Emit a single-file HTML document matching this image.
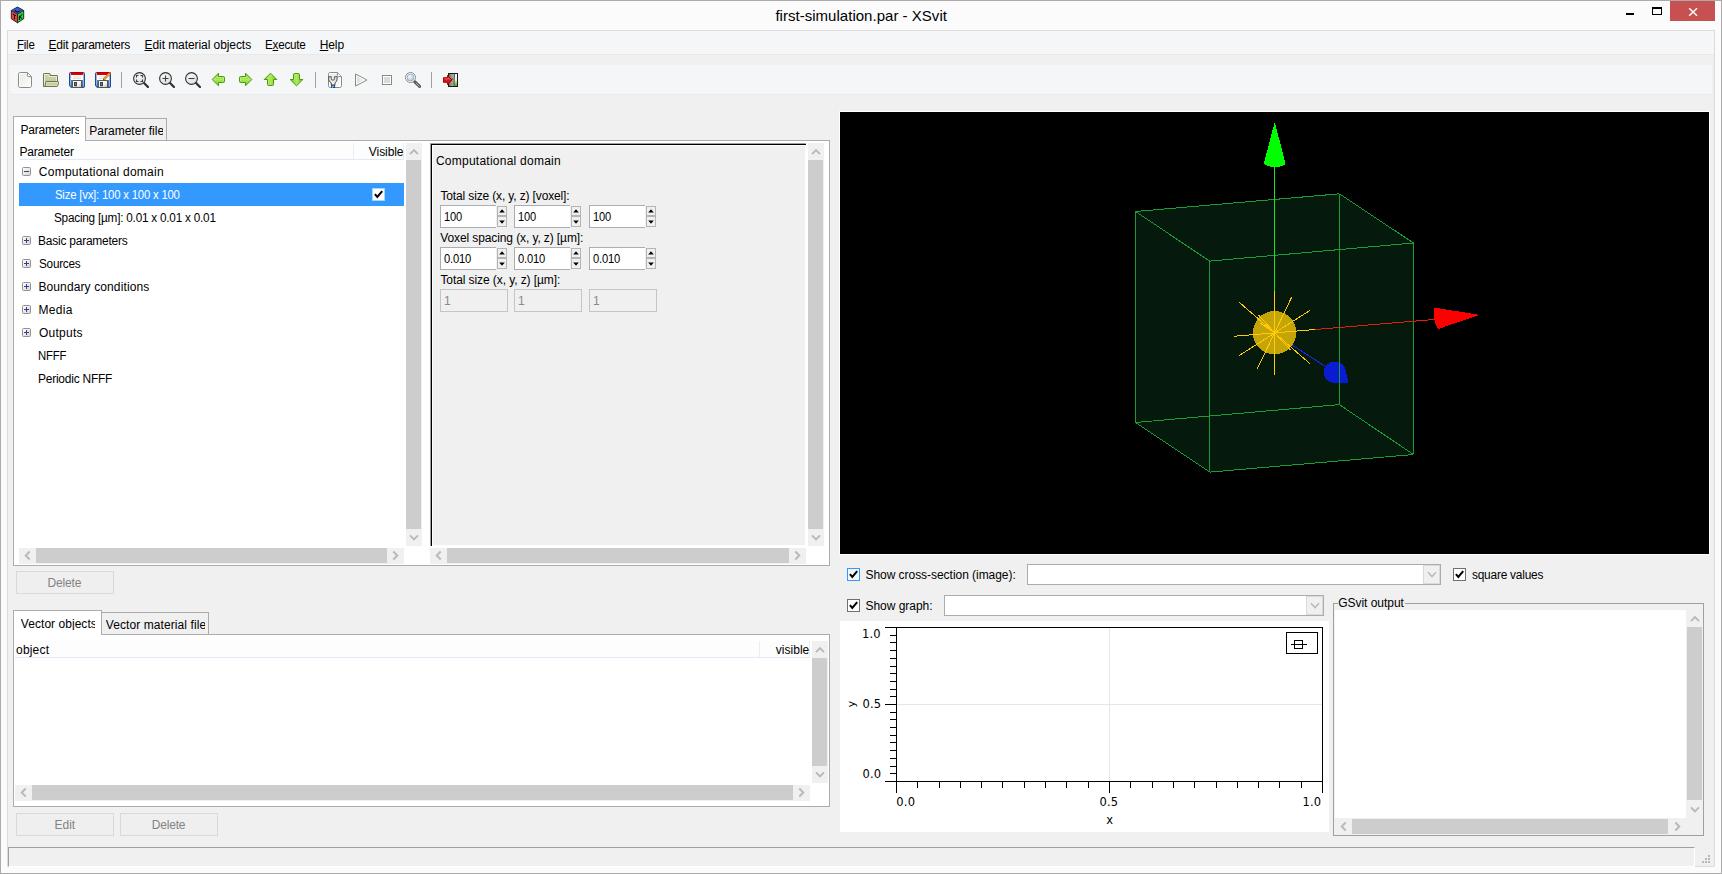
<!DOCTYPE html>
<html lang="en">
<head>
<meta charset="utf-8">
<title>first-simulation.par - XSvit</title>
<style>
html,body{margin:0;padding:0;}
body{width:1722px;height:874px;overflow:hidden;position:relative;background:#f0f0f0;font-family:"Liberation Sans",sans-serif;font-size:12px;color:#000;}
div,span.t,svg{position:absolute;box-sizing:border-box;}
.t{white-space:nowrap;line-height:1;}
u{text-decoration:underline;text-decoration-thickness:1px;text-underline-offset:1px;}
.sb{background:#f0f0f0;}
.th{background:#cdcdcd;}
.btn{border:1px solid #d9d9d9;background:#efefef;}
.entry{border:1px solid #abadb3;background:#fff;}
.entry.dis{background:#f0f0f0;border-color:#c5c5c5;}
.white{background:#fff;}

</style>
</head>
<body>
<div class="frame" style="left:0px;top:0px;width:1722px;height:874px;background:#fbfbfb;border:1px solid #ababab;"></div>
<div class="client" style="left:7px;top:30px;width:1708px;height:837px;background:#f0f0f0;border:1px solid #dcdcdc;"></div>
<span class="t" style="left:775.41px;top:7.80px;font-size:15px;letter-spacing:0.023px;">first-simulation.par - XSvit</span><div style="left:1626px;top:13px;width:8px;height:2px;background:#000;"></div>
<div style="left:1652px;top:7px;width:10px;height:8px;border:1px solid #000;border-top-width:2px;"></div>
<div style="left:1670px;top:1px;width:45px;height:20px;background:#c75050;"><svg width="45" height="20" viewBox="0 0 45 20"><path d="M19.2 7.2 L27 14.7 M27 7.2 L19.2 14.7" stroke="#fff" stroke-width="1.5" fill="none"/></svg></div>
<svg style="left:10px;top:6px" width="16" height="18" viewBox="0 0 16 18">
<polygon points="7.5,1 13.7,4.5 7.5,8 1.3,4.5" fill="#2e5fd0"/>
<polygon points="1.3,4.5 7.5,8 7.5,16.8 1.3,12.8" fill="#e8403c"/>
<polygon points="13.7,4.5 7.5,8 7.5,16.8 13.7,12.8" fill="#2fd13a"/>
<path d="M7.5,1 13.7,4.5 13.7,12.8 7.5,16.8 1.3,12.8 1.3,4.5Z M1.3,4.5 7.5,8 13.7,4.5 M7.5,8V16.8" fill="none" stroke="#1a1a2a" stroke-width="0.9"/>
<path d="M3,8.2 6,9.8 M4.5,9 4.5,13.3 M9.4,9.8 9.4,14 M12,8.3 9.6,11.3 12.2,12.4 M5.6,4.2 a2,1.2 0 1 0 3.8,0.4" fill="none" stroke="#000" stroke-width="1"/>
</svg><div class="menubar" style="left:8px;top:31px;width:1706px;height:24px;background:#f5f6f7;border-bottom:1px solid #e8e9ea;"></div>
<span class="t" style="left:16.50px;top:38.84px;font-size:12px;letter-spacing:-0.220px;transform:scaleX(0.9519);transform-origin:0 0;"><u>F</u>ile</span><span class="t" style="left:48.50px;top:38.84px;font-size:12px;letter-spacing:-0.216px;"><u>E</u>dit parameters</span><span class="t" style="left:144.50px;top:38.84px;font-size:12px;letter-spacing:-0.071px;"><u>E</u>dit material objects</span><span class="t" style="left:264.70px;top:38.84px;font-size:12px;letter-spacing:-0.220px;transform:scaleX(0.9714);transform-origin:0 0;">E<u>x</u>ecute</span><span class="t" style="left:319.70px;top:38.84px;font-size:12px;letter-spacing:-0.095px;"><u>H</u>elp</span><div class="toolbar" style="left:10px;top:65px;width:1702px;height:30px;background:#f5f6f7;border-bottom:1px solid #eaebec;"></div>
<div style="left:121px;top:72px;width:1px;height:16px;background:#a0a0a0;"></div>
<div style="left:315px;top:72px;width:1px;height:16px;background:#a0a0a0;"></div>
<div style="left:431px;top:72px;width:1px;height:16px;background:#a0a0a0;"></div>
<svg style="left:17px;top:72px" width="16" height="16" viewBox="0 0 16 16"><defs>
<linearGradient id="gDoc" x1="0" y1="0" x2="1" y2="1"><stop offset="0" stop-color="#e6e7e3"/><stop offset="0.55" stop-color="#f4f4f2"/><stop offset="1" stop-color="#ffffff"/></linearGradient>
<linearGradient id="gFold" x1="0" y1="0" x2="0" y2="1"><stop offset="0" stop-color="#d0d5a8"/><stop offset="0.6" stop-color="#c6caa2"/><stop offset="1" stop-color="#b4b79a"/></linearGradient>
<linearGradient id="gFlop" x1="0" y1="0" x2="0" y2="1"><stop offset="0" stop-color="#6f9fd8"/><stop offset="1" stop-color="#3566ab"/></linearGradient>
<linearGradient id="gShut" x1="0" y1="0" x2="1" y2="1"><stop offset="0" stop-color="#ffffff"/><stop offset="0.6" stop-color="#f4f4f4"/><stop offset="1" stop-color="#b8b8b8"/></linearGradient>
<linearGradient id="gArrH" x1="0" y1="0" x2="0" y2="1"><stop offset="0" stop-color="#73c51c"/><stop offset="0.5" stop-color="#aee860"/><stop offset="1" stop-color="#73c51c"/></linearGradient>
<linearGradient id="gArrV" x1="0" y1="0" x2="1" y2="0"><stop offset="0" stop-color="#73c51c"/><stop offset="0.5" stop-color="#aee860"/><stop offset="1" stop-color="#73c51c"/></linearGradient>
<radialGradient id="gLens" cx="0.4" cy="0.35" r="0.7"><stop offset="0" stop-color="#f6f6f4"/><stop offset="1" stop-color="#dededa"/></radialGradient>
<radialGradient id="gLensB" cx="0.35" cy="0.3" r="0.8"><stop offset="0" stop-color="#f4f8fc"/><stop offset="1" stop-color="#b4c6de"/></radialGradient>
<linearGradient id="gPlay" x1="0" y1="0" x2="1" y2="0"><stop offset="0" stop-color="#d6d9d2"/><stop offset="1" stop-color="#ffffff"/></linearGradient>
<linearGradient id="gDoor" x1="0" y1="0" x2="1" y2="0"><stop offset="0" stop-color="#6e706c"/><stop offset="1" stop-color="#c4c6c0"/></linearGradient>
<linearGradient id="gDoorR" x1="0" y1="0" x2="0" y2="1"><stop offset="0" stop-color="#ffffff"/><stop offset="0.5" stop-color="#e8f0dc"/><stop offset="1" stop-color="#4e9a06"/></linearGradient>
<linearGradient id="gWr" x1="0" y1="0" x2="1" y2="0"><stop offset="0" stop-color="#d8dad6"/><stop offset="0.5" stop-color="#f4f5f3"/><stop offset="1" stop-color="#d0d2cd"/></linearGradient>
</defs><path d="M3.3 0.5 H10.3 L14.5 4.6 V13.7 Q14.5 15.5 12.7 15.5 H3.3 Q1.5 15.5 1.5 13.7 V2.3 Q1.5 0.5 3.3 0.5 Z" fill="url(#gDoc)" stroke="#888a85" stroke-width="1"/><path d="M2.5 14.5 V1.5 H9.8 M13.5 5.5 V14.5" fill="none" stroke="#fff" stroke-width="1" opacity="0.95"/><path d="M10.4 0.9 V3.5 Q10.4 4.6 11.6 4.6 H14.1" fill="#fff" stroke="#888a85" stroke-width="1"/></svg>
<svg style="left:43px;top:72px" width="16" height="16" viewBox="0 0 16 16"><path d="M1.5 1.5 H6.2 Q7 1.5 7 2.3 V3.5 H13.6 Q14.5 3.5 14.5 4.4 V9.5 H1.5 V13.6 Q1.5 14.5 0.5 14.5 V2.5 Q0.5 1.5 1.5 1.5 Z" fill="url(#gFold)" stroke="#6f7354" stroke-width="1"/>
<path d="M0.5 2.3 Q0.5 1.5 1.4 1.5 H6.1 Q7 1.5 7 2.4 V3.5 H13.6 Q14.5 3.5 14.5 4.4 V13.5 Q14.5 14.5 13.5 14.5 H1.4 Q0.5 14.5 0.5 13.6 Z" fill="url(#gFold)" stroke="#6f7354" stroke-width="1"/>
<path d="M1.5 13.5 V2.5 H6 V4.5 H13.5 V9" fill="none" stroke="#eef0dc" stroke-width="1" opacity="0.9"/>
<path d="M3 9.5 H14.8 Q15.8 9.5 15.5 10.5 L14.8 13.6 Q14.5 14.5 13.5 14.5 H1.5 Q2.2 14.3 2.3 13.4 L2.6 10.3 Q2.7 9.5 3.4 9.5 Z" fill="#dfe3bd" stroke="#6f7354" stroke-width="1"/>
<path d="M3.8 11.5 H14 M3.6 12.6 H13.6" stroke="#c9cf98" stroke-width="1.2" fill="none"/></svg>
<svg style="left:69px;top:72px" width="16" height="16" viewBox="0 0 16 16"><path d="M1.5 0.5 H14.5 Q15.5 0.5 15.5 1.5 V14.5 Q15.5 15.5 14.5 15.5 H2.3 L0.5 13.8 V1.5 Q0.5 0.5 1.5 0.5 Z" fill="url(#gFlop)" stroke="#1f4b8c" stroke-width="1"/>
<path d="M1.5 13.5 V1.5 M14.5 1.5 V14.5" stroke="#a8c4e6" stroke-width="1" fill="none" opacity="0.8"/>
<rect x="2" y="0" width="12" height="8" rx="0.6" fill="#fff"/>
<rect x="2" y="0" width="12" height="3" fill="#e00000"/><rect x="2" y="0" width="12" height="1" fill="#b40000"/>
<path d="M4 4.9 H12 M4 6.5 H12" stroke="#dfe1dc" stroke-width="1" fill="none"/>
<path d="M3.5 15.5 V9.3 Q3.5 8.5 4.3 8.5 H12.5 V15.5 Z" fill="url(#gShut)" stroke="#555753" stroke-width="1"/>
<rect x="5.5" y="10.5" width="2" height="3.3" fill="#4a7ec4" stroke="#41433f" stroke-width="1"/></svg>
<svg style="left:95px;top:72px" width="16" height="16" viewBox="0 0 16 16"><path d="M1.5 0.5 H14.5 Q15.5 0.5 15.5 1.5 V14.5 Q15.5 15.5 14.5 15.5 H2.3 L0.5 13.8 V1.5 Q0.5 0.5 1.5 0.5 Z" fill="url(#gFlop)" stroke="#1f4b8c" stroke-width="1"/>
<path d="M1.5 13.5 V1.5 M14.5 1.5 V14.5" stroke="#a8c4e6" stroke-width="1" fill="none" opacity="0.8"/>
<rect x="2" y="0" width="12" height="8" rx="0.6" fill="#fff"/>
<rect x="2" y="0" width="12" height="3" fill="#e00000"/><rect x="2" y="0" width="12" height="1" fill="#b40000"/>
<path d="M4 4.9 H12 M4 6.5 H12" stroke="#dfe1dc" stroke-width="1" fill="none"/>
<path d="M3.5 15.5 V9.3 Q3.5 8.5 4.3 8.5 H12.5 V15.5 Z" fill="url(#gShut)" stroke="#555753" stroke-width="1"/>
<rect x="5.5" y="10.5" width="2" height="3.3" fill="#4a7ec4" stroke="#41433f" stroke-width="1"/><path d="M15.4 0.8 L9 7.2" stroke="#b8781c" stroke-width="2.4" fill="none"/><path d="M15.2 1 L9.4 6.8" stroke="#f2b24a" stroke-width="1.1" fill="none"/><path d="M7.9 8.3 L8.3 6.5 L9.7 7.9 Z" fill="#5c4010"/><path d="M14.4 0.4 L15.8 1.8" stroke="#c83030" stroke-width="1.4"/></svg>
<svg style="left:133px;top:72px" width="16" height="16" viewBox="0 0 16 16"><path d="M10.8 10.8 L15 15" stroke="#2e3436" stroke-width="2.2" stroke-linecap="round" fill="none"/><circle cx="6.5" cy="6.5" r="5.9" fill="url(#gLens)" stroke="#2e3436" stroke-width="1.1"/><path d="M3.5 5.5 V3.5 H5.5 M7.5 3.5 H9.5 V5.5 M9.5 7.5 V9.5 H7.5 M5.5 9.5 H3.5 V7.5" fill="none" stroke="#3a3f41" stroke-width="1.1"/></svg>
<svg style="left:159px;top:72px" width="16" height="16" viewBox="0 0 16 16"><path d="M10.8 10.8 L15 15" stroke="#2e3436" stroke-width="2.2" stroke-linecap="round" fill="none"/><circle cx="6.5" cy="6.5" r="5.9" fill="url(#gLens)" stroke="#2e3436" stroke-width="1.1"/><path d="M3.5 6.5 H9.5 M6.5 3.5 V9.5" fill="none" stroke="#3a3f41" stroke-width="1.1"/></svg>
<svg style="left:185px;top:72px" width="16" height="16" viewBox="0 0 16 16"><path d="M10.8 10.8 L15 15" stroke="#2e3436" stroke-width="2.2" stroke-linecap="round" fill="none"/><circle cx="6.5" cy="6.5" r="5.9" fill="url(#gLens)" stroke="#2e3436" stroke-width="1.1"/><path d="M3.5 6.5 H9.5" fill="none" stroke="#3a3f41" stroke-width="1.1"/></svg>
<svg style="left:211px;top:72px" width="16" height="16" viewBox="0 0 16 16"><path d="M1.2 7.5 L7.5 1.2 V4.5 H12.4 Q13.5 4.5 13.5 5.6 V9.4 Q13.5 10.5 12.4 10.5 H7.5 V13.8 Z" fill="url(#gArrH)" stroke="#4e9a06" stroke-width="1" stroke-linejoin="round"/><path d="M3 7.5 L6.5 4 V5.5 H12 Q12.5 5.5 12.5 6 V9" fill="none" stroke="#c6f08e" stroke-width="0.8" opacity="0.8"/></svg>
<svg style="left:237px;top:72px" width="16" height="16" viewBox="0 0 16 16"><path d="M14.8 7.5 L8.5 1.2 V4.5 H3.6 Q2.5 4.5 2.5 5.6 V9.4 Q2.5 10.5 3.6 10.5 H8.5 V13.8 Z" fill="url(#gArrH)" stroke="#4e9a06" stroke-width="1" stroke-linejoin="round"/><path d="M3.5 9 V6 Q3.5 5.5 4 5.5 H9.5 V4 L13 7.5" fill="none" stroke="#c6f08e" stroke-width="0.8" opacity="0.8"/></svg>
<svg style="left:263px;top:72px" width="16" height="16" viewBox="0 0 16 16"><path d="M7.5 1.2 L13.8 7.5 H10.5 V12.4 Q10.5 13.5 9.4 13.5 H5.6 Q4.5 13.5 4.5 12.4 V7.5 H1.2 Z" fill="url(#gArrV)" stroke="#4e9a06" stroke-width="1" stroke-linejoin="round"/><path d="M7.5 3 L4 6.5 H5.5 V12.6" fill="none" stroke="#c6f08e" stroke-width="0.8" opacity="0.8"/></svg>
<svg style="left:289px;top:72px" width="16" height="16" viewBox="0 0 16 16"><path d="M7.5 13.8 L13.8 7.5 H10.5 V2.6 Q10.5 1.5 9.4 1.5 H5.6 Q4.5 1.5 4.5 2.6 V7.5 H1.2 Z" fill="url(#gArrV)" stroke="#4e9a06" stroke-width="1" stroke-linejoin="round"/><path d="M5.5 8.5 V3 Q5.5 2.5 6 2.5 H9" fill="none" stroke="#c6f08e" stroke-width="0.8" opacity="0.8"/></svg>
<svg style="left:327px;top:72px" width="16" height="16" viewBox="0 0 16 16"><path d="M3.3 0.5 H10.3 L14.5 4.6 V13.7 Q14.5 15.5 12.7 15.5 H3.3 Q1.5 15.5 1.5 13.7 V2.3 Q1.5 0.5 3.3 0.5 Z" fill="url(#gDoc)" stroke="#888a85" stroke-width="1"/><path d="M2.5 14.5 V1.5 H9.8 M13.5 5.5 V14.5" fill="none" stroke="#fff" stroke-width="1" opacity="0.95"/><path d="M10.4 0.9 V3.5 Q10.4 4.6 11.6 4.6 H14.1" fill="#fff" stroke="#888a85" stroke-width="1"/><path d="M1.7 4.7 H4.3 V6.8 Q4.3 8.2 5.9 8.2 Q7.4 8.2 7.4 6.8 V4.7 H10.1 V7.4 Q10.1 9.6 8 10.8 V13 H4.3 V10.8 Q1.7 9.6 1.7 7.4 Z" fill="url(#gWr)" stroke="#555753" stroke-width="1" stroke-linejoin="round"/>
<rect x="4" y="12.9" width="4.1" height="3.1" fill="#204a87"/><path d="M5.4 15.6 V14.3 H7" stroke="#cfe0f5" stroke-width="0.9" fill="none"/></svg>
<svg style="left:353px;top:72px" width="16" height="16" viewBox="0 0 16 16"><path d="M2.5 2 L14 8 L2.5 14 Z" fill="url(#gPlay)" stroke="#888a85" stroke-width="1" stroke-linejoin="round"/><path d="M3.5 3.8 L11.6 8 L3.5 12.2 Z" fill="none" stroke="#fff" stroke-width="1" opacity="0.9"/></svg>
<svg style="left:379px;top:72px" width="16" height="16" viewBox="0 0 16 16"><rect x="3.5" y="3.5" width="9" height="9" fill="#d8dad4" stroke="#888a85" stroke-width="1"/><rect x="4.5" y="4.5" width="7" height="7" fill="none" stroke="#fff" stroke-width="1"/></svg>
<svg style="left:405px;top:72px" width="16" height="16" viewBox="0 0 16 16"><path d="M9.6 9.6 L14.6 14.4" stroke="#555753" stroke-width="3" stroke-linecap="round" fill="none"/><path d="M11 11 L14.3 14.1" stroke="#b8bab5" stroke-width="1" stroke-linecap="round" fill="none"/>
<circle cx="5.5" cy="5.5" r="5" fill="#fff" stroke="#888a85" stroke-width="1"/><circle cx="5.5" cy="5.5" r="3.4" fill="url(#gLensB)" stroke="#8ea0ba" stroke-width="0.8"/></svg>
<svg style="left:443px;top:72px" width="16" height="16" viewBox="0 0 16 16"><rect x="5.5" y="1.5" width="9" height="13" fill="url(#gDoorR)" stroke="#1b1c1a" stroke-width="1"/>
<path d="M6 2 H11.3 L10.8 14 H6 Z" fill="url(#gDoor)"/><path d="M11.4 2 L10.9 13.5" stroke="#2e3436" stroke-width="0.9" fill="none"/><rect x="9.2" y="6.5" width="0.9" height="1" fill="#1b1c1a"/>
<path d="M0.5 5.7 H4.5 V3.5 L9 8 L4.5 12.5 V10.3 H0.5 Z" fill="#d81414" stroke="#a40000" stroke-width="1" stroke-linejoin="round"/><path d="M1.5 7 H5.4 V5.8 L7.5 8" fill="none" stroke="#f06868" stroke-width="0.9"/></svg><div class="panel" style="left:13px;top:140px;width:817px;height:426px;background:#fff;border:1px solid #acacac;"></div>
<div class="tab" style="left:85px;top:118px;width:82px;height:23px;background:#f0f0f0;border:1px solid #acacac;"></div>
<div class="tab sel" style="left:13px;top:116px;width:73px;height:25px;background:#fff;border:1px solid #acacac;border-bottom:none;"></div>
<span class="t" style="left:20.50px;top:123.84px;font-size:12px;letter-spacing:-0.210px;width:58.80px;overflow:hidden;">Parameters</span><span class="t" style="left:89.30px;top:124.84px;font-size:12px;letter-spacing:0.010px;width:73.30px;overflow:hidden;">Parameter file</span><div class="hdr" style="left:19px;top:143px;width:385px;height:17px;background:#fdfdfd;border-bottom:1px solid #e0e9f5;"></div>
<div style="left:353px;top:143px;width:1px;height:16px;background:#e6eef8;"></div>
<div style="left:403px;top:143px;width:1px;height:16px;background:#e6eef8;"></div>
<span class="t" style="left:19.40px;top:145.84px;font-size:12px;letter-spacing:-0.175px;">Parameter</span><span class="t" style="left:368.86px;top:145.84px;font-size:12px;letter-spacing:-0.075px;">Visible</span><div class="rowsel" style="left:19px;top:183px;width:385px;height:23px;background:#3399ff;"></div>
<span class="t" style="left:38.84px;top:165.84px;font-size:12px;letter-spacing:0.245px;">Computational domain</span><svg style="left:22px;top:167px" width="9" height="9" viewBox="0 0 9 9"><defs><linearGradient id="eg176" x1="0" y1="0" x2="1" y2="1"><stop offset="0" stop-color="#fff"/><stop offset="1" stop-color="#d6d3cc"/></linearGradient></defs><rect x="0.5" y="0.5" width="8" height="8" rx="1" fill="url(#eg176)" stroke="#919191"/><path d="M2 4.5H7" stroke="#2b3f9b" stroke-width="1" fill="none"/></svg><span class="t" style="left:54.79px;top:188.84px;font-size:12px;color:#fff;letter-spacing:-0.220px;transform:scaleX(0.9470);transform-origin:0 0;">Size [vx]: 100 x 100 x 100</span><span class="t" style="left:54.27px;top:211.84px;font-size:12px;letter-spacing:-0.220px;transform:scaleX(0.9784);transform-origin:0 0;">Spacing [µm]: 0.01 x 0.01 x 0.01</span><span class="t" style="left:38.40px;top:234.84px;font-size:12px;letter-spacing:-0.220px;transform:scaleX(0.9969);transform-origin:0 0;">Basic parameters</span><svg style="left:22px;top:236px" width="9" height="9" viewBox="0 0 9 9"><defs><linearGradient id="eg245" x1="0" y1="0" x2="1" y2="1"><stop offset="0" stop-color="#fff"/><stop offset="1" stop-color="#d6d3cc"/></linearGradient></defs><rect x="0.5" y="0.5" width="8" height="8" rx="1" fill="url(#eg245)" stroke="#919191"/><path d="M2 4.5H7 M4.5 2V7" stroke="#2b3f9b" stroke-width="1" fill="none"/></svg><span class="t" style="left:38.66px;top:257.84px;font-size:12px;letter-spacing:-0.220px;transform:scaleX(0.9751);transform-origin:0 0;">Sources</span><svg style="left:22px;top:259px" width="9" height="9" viewBox="0 0 9 9"><defs><linearGradient id="eg268" x1="0" y1="0" x2="1" y2="1"><stop offset="0" stop-color="#fff"/><stop offset="1" stop-color="#d6d3cc"/></linearGradient></defs><rect x="0.5" y="0.5" width="8" height="8" rx="1" fill="url(#eg268)" stroke="#919191"/><path d="M2 4.5H7 M4.5 2V7" stroke="#2b3f9b" stroke-width="1" fill="none"/></svg><span class="t" style="left:38.40px;top:280.84px;font-size:12px;letter-spacing:0.118px;">Boundary conditions</span><svg style="left:22px;top:282px" width="9" height="9" viewBox="0 0 9 9"><defs><linearGradient id="eg291" x1="0" y1="0" x2="1" y2="1"><stop offset="0" stop-color="#fff"/><stop offset="1" stop-color="#d6d3cc"/></linearGradient></defs><rect x="0.5" y="0.5" width="8" height="8" rx="1" fill="url(#eg291)" stroke="#919191"/><path d="M2 4.5H7 M4.5 2V7" stroke="#2b3f9b" stroke-width="1" fill="none"/></svg><span class="t" style="left:38.40px;top:303.84px;font-size:12px;letter-spacing:0.347px;">Media</span><svg style="left:22px;top:305px" width="9" height="9" viewBox="0 0 9 9"><defs><linearGradient id="eg314" x1="0" y1="0" x2="1" y2="1"><stop offset="0" stop-color="#fff"/><stop offset="1" stop-color="#d6d3cc"/></linearGradient></defs><rect x="0.5" y="0.5" width="8" height="8" rx="1" fill="url(#eg314)" stroke="#919191"/><path d="M2 4.5H7 M4.5 2V7" stroke="#2b3f9b" stroke-width="1" fill="none"/></svg><span class="t" style="left:38.90px;top:326.84px;font-size:12px;letter-spacing:0.270px;">Outputs</span><svg style="left:22px;top:328px" width="9" height="9" viewBox="0 0 9 9"><defs><linearGradient id="eg337" x1="0" y1="0" x2="1" y2="1"><stop offset="0" stop-color="#fff"/><stop offset="1" stop-color="#d6d3cc"/></linearGradient></defs><rect x="0.5" y="0.5" width="8" height="8" rx="1" fill="url(#eg337)" stroke="#919191"/><path d="M2 4.5H7 M4.5 2V7" stroke="#2b3f9b" stroke-width="1" fill="none"/></svg><span class="t" style="left:38.40px;top:349.84px;font-size:12px;letter-spacing:-0.220px;transform:scaleX(0.9450);transform-origin:0 0;">NFFF</span><span class="t" style="left:38.40px;top:372.84px;font-size:12px;letter-spacing:-0.220px;transform:scaleX(0.9955);transform-origin:0 0;">Periodic NFFF</span><div style="left:372px;top:188px;width:13px;height:13px;background:#fff;border:1px solid #a9d3ff;"><svg width="13" height="13" viewBox="0 0 13 13" style="left:-1px;top:-1px"><path d="M2.9 6.2 L5.3 9 L10.2 3.2" fill="none" stroke="#000" stroke-width="2"/></svg></div>
<div class="sb" style="left:406px;top:143px;width:16px;height:403px;"></div>
<div class="th" style="left:406px;top:160px;width:15px;height:369px;"></div>
<svg style="left:406px;top:143px" width="16" height="17" viewBox="0 0 16 17"><path d="M4 11.2 L8 7.2 L12 11.2" fill="none" stroke="#b8b8b8" stroke-width="1.9"/></svg><svg style="left:406px;top:529px" width="16" height="17" viewBox="0 0 16 17"><path d="M4 6.3 L8 10.3 L12 6.3" fill="none" stroke="#b8b8b8" stroke-width="1.9"/></svg><div class="sb" style="left:19px;top:548px;width:385px;height:16px;"></div>
<div class="th" style="left:36px;top:548px;width:351px;height:15px;"></div>
<svg style="left:19px;top:548px" width="17" height="16" viewBox="0 0 17 16"><path d="M10.7 3.5 L6.7 7.5 L10.7 11.5" fill="none" stroke="#b8b8b8" stroke-width="1.9"/></svg><svg style="left:387px;top:548px" width="17" height="16" viewBox="0 0 17 16"><path d="M6.3 3.5 L10.3 7.5 L6.3 11.5" fill="none" stroke="#b8b8b8" stroke-width="1.9"/></svg><div class="sub" style="left:430px;top:143px;width:376px;height:403px;border-left:1px solid #a0a0a0;border-top:1px solid #a0a0a0;"></div>
<div style="left:431px;top:144px;width:375px;height:402px;border-left:1px solid #000;border-top:1px solid #000;"></div>
<div style="left:433px;top:146px;width:372px;height:399px;background:#f0f0f0;"></div>
<div class="sb" style="left:808px;top:143px;width:16px;height:403px;"></div>
<div class="th" style="left:808px;top:160px;width:15px;height:369px;"></div>
<svg style="left:808px;top:143px" width="16" height="17" viewBox="0 0 16 17"><path d="M4 11.2 L8 7.2 L12 11.2" fill="none" stroke="#b8b8b8" stroke-width="1.9"/></svg><svg style="left:808px;top:529px" width="16" height="17" viewBox="0 0 16 17"><path d="M4 6.3 L8 10.3 L12 6.3" fill="none" stroke="#b8b8b8" stroke-width="1.9"/></svg><div class="sb" style="left:430px;top:548px;width:376px;height:16px;"></div>
<div class="th" style="left:447px;top:548px;width:342px;height:15px;"></div>
<svg style="left:430px;top:548px" width="17" height="16" viewBox="0 0 17 16"><path d="M10.7 3.5 L6.7 7.5 L10.7 11.5" fill="none" stroke="#b8b8b8" stroke-width="1.9"/></svg><svg style="left:789px;top:548px" width="17" height="16" viewBox="0 0 17 16"><path d="M6.3 3.5 L10.3 7.5 L6.3 11.5" fill="none" stroke="#b8b8b8" stroke-width="1.9"/></svg><span class="t" style="left:435.94px;top:154.84px;font-size:12px;letter-spacing:0.245px;">Computational domain</span><span class="t" style="left:440.46px;top:189.84px;font-size:12px;letter-spacing:-0.143px;">Total size (x, y, z) [voxel]:</span><span class="t" style="left:440.26px;top:231.84px;font-size:12px;letter-spacing:-0.106px;">Voxel spacing (x, y, z) [µm]:</span><span class="t" style="left:440.46px;top:273.84px;font-size:12px;letter-spacing:-0.089px;">Total size (x, y, z) [µm]:</span><div class="entry" style="left:440px;top:205px;width:56px;height:23px;border-right:none;"></div>
<div style="left:497px;top:206px;width:10px;height:10px;border:1px solid #b4b4b4;background:#f0f0f0;"><svg style="left:-1px;top:-1px" width="10" height="10" viewBox="0 0 10 10"><path d="M2.2 6.5 L5 3.3 L7.8 6.5Z" fill="#000"/></svg></div>
<div style="left:497px;top:216px;width:10px;height:11px;border:1px solid #b4b4b4;background:#f0f0f0;"><svg style="left:-1px;top:-0.5px" width="10" height="10" viewBox="0 0 10 10"><path d="M2.2 3.5 L5 6.7 L7.8 3.5Z" fill="#000"/></svg></div>
<span class="t" style="left:443.95px;top:210.84px;font-size:12px;letter-spacing:-0.220px;transform:scaleX(0.9245);transform-origin:0 0;">100</span><div class="entry" style="left:440px;top:247px;width:56px;height:23px;border-right:none;"></div>
<div style="left:497px;top:248px;width:10px;height:10px;border:1px solid #b4b4b4;background:#f0f0f0;"><svg style="left:-1px;top:-1px" width="10" height="10" viewBox="0 0 10 10"><path d="M2.2 6.5 L5 3.3 L7.8 6.5Z" fill="#000"/></svg></div>
<div style="left:497px;top:258px;width:10px;height:11px;border:1px solid #b4b4b4;background:#f0f0f0;"><svg style="left:-1px;top:-0.5px" width="10" height="10" viewBox="0 0 10 10"><path d="M2.2 3.5 L5 6.7 L7.8 3.5Z" fill="#000"/></svg></div>
<span class="t" style="left:444.33px;top:252.84px;font-size:12px;letter-spacing:-0.220px;transform:scaleX(0.9313);transform-origin:0 0;">0.010</span><div class="entry dis" style="left:440px;top:289px;width:68px;height:23px;"></div>
<span class="t" style="left:444.00px;top:294.84px;font-size:12px;color:#8a8a8a;">1</span><div class="entry" style="left:514px;top:205px;width:56px;height:23px;border-right:none;"></div>
<div style="left:571px;top:206px;width:10px;height:10px;border:1px solid #b4b4b4;background:#f0f0f0;"><svg style="left:-1px;top:-1px" width="10" height="10" viewBox="0 0 10 10"><path d="M2.2 6.5 L5 3.3 L7.8 6.5Z" fill="#000"/></svg></div>
<div style="left:571px;top:216px;width:10px;height:11px;border:1px solid #b4b4b4;background:#f0f0f0;"><svg style="left:-1px;top:-0.5px" width="10" height="10" viewBox="0 0 10 10"><path d="M2.2 3.5 L5 6.7 L7.8 3.5Z" fill="#000"/></svg></div>
<span class="t" style="left:517.96px;top:210.84px;font-size:12px;letter-spacing:-0.220px;transform:scaleX(0.9245);transform-origin:0 0;">100</span><div class="entry" style="left:514px;top:247px;width:56px;height:23px;border-right:none;"></div>
<div style="left:571px;top:248px;width:10px;height:10px;border:1px solid #b4b4b4;background:#f0f0f0;"><svg style="left:-1px;top:-1px" width="10" height="10" viewBox="0 0 10 10"><path d="M2.2 6.5 L5 3.3 L7.8 6.5Z" fill="#000"/></svg></div>
<div style="left:571px;top:258px;width:10px;height:11px;border:1px solid #b4b4b4;background:#f0f0f0;"><svg style="left:-1px;top:-0.5px" width="10" height="10" viewBox="0 0 10 10"><path d="M2.2 3.5 L5 6.7 L7.8 3.5Z" fill="#000"/></svg></div>
<span class="t" style="left:518.33px;top:252.84px;font-size:12px;letter-spacing:-0.220px;transform:scaleX(0.9313);transform-origin:0 0;">0.010</span><div class="entry dis" style="left:514px;top:289px;width:68px;height:23px;"></div>
<span class="t" style="left:518.00px;top:294.84px;font-size:12px;color:#8a8a8a;">1</span><div class="entry" style="left:589px;top:205px;width:56px;height:23px;border-right:none;"></div>
<div style="left:646px;top:206px;width:10px;height:10px;border:1px solid #b4b4b4;background:#f0f0f0;"><svg style="left:-1px;top:-1px" width="10" height="10" viewBox="0 0 10 10"><path d="M2.2 6.5 L5 3.3 L7.8 6.5Z" fill="#000"/></svg></div>
<div style="left:646px;top:216px;width:10px;height:11px;border:1px solid #b4b4b4;background:#f0f0f0;"><svg style="left:-1px;top:-0.5px" width="10" height="10" viewBox="0 0 10 10"><path d="M2.2 3.5 L5 6.7 L7.8 3.5Z" fill="#000"/></svg></div>
<span class="t" style="left:592.96px;top:210.84px;font-size:12px;letter-spacing:-0.220px;transform:scaleX(0.9245);transform-origin:0 0;">100</span><div class="entry" style="left:589px;top:247px;width:56px;height:23px;border-right:none;"></div>
<div style="left:646px;top:248px;width:10px;height:10px;border:1px solid #b4b4b4;background:#f0f0f0;"><svg style="left:-1px;top:-1px" width="10" height="10" viewBox="0 0 10 10"><path d="M2.2 6.5 L5 3.3 L7.8 6.5Z" fill="#000"/></svg></div>
<div style="left:646px;top:258px;width:10px;height:11px;border:1px solid #b4b4b4;background:#f0f0f0;"><svg style="left:-1px;top:-0.5px" width="10" height="10" viewBox="0 0 10 10"><path d="M2.2 3.5 L5 6.7 L7.8 3.5Z" fill="#000"/></svg></div>
<span class="t" style="left:593.33px;top:252.84px;font-size:12px;letter-spacing:-0.220px;transform:scaleX(0.9313);transform-origin:0 0;">0.010</span><div class="entry dis" style="left:589px;top:289px;width:68px;height:23px;"></div>
<span class="t" style="left:593.00px;top:294.84px;font-size:12px;color:#8a8a8a;">1</span><div class="btn" style="left:16px;top:571px;width:98px;height:23px;"></div>
<span class="t" style="left:47.60px;top:576.84px;font-size:12px;color:#838383;letter-spacing:-0.171px;">Delete</span><div class="panel" style="left:13px;top:634px;width:817px;height:173px;background:#fff;border:1px solid #acacac;"></div>
<div class="tab" style="left:101px;top:612px;width:108px;height:23px;background:#f0f0f0;border:1px solid #acacac;"></div>
<div class="tab sel" style="left:13px;top:610px;width:89px;height:25px;background:#fff;border:1px solid #acacac;border-bottom:none;"></div>
<span class="t" style="left:20.86px;top:617.84px;font-size:12px;letter-spacing:0.043px;width:74.54px;overflow:hidden;">Vector objects</span><span class="t" style="left:105.86px;top:618.84px;font-size:12px;letter-spacing:0.080px;width:98.84px;overflow:hidden;">Vector material file</span><div class="hdr" style="left:15px;top:641px;width:795px;height:17px;background:#fdfdfd;border-bottom:1px solid #e0e9f5;"></div>
<div style="left:759px;top:641px;width:1px;height:16px;background:#e6eef8;"></div>
<div style="left:809px;top:641px;width:1px;height:16px;background:#e6eef8;"></div>
<span class="t" style="left:16.04px;top:643.84px;font-size:12px;letter-spacing:0.190px;">object</span><span class="t" style="left:775.87px;top:643.84px;font-size:12px;letter-spacing:0.004px;">visible</span><div class="sb" style="left:812px;top:641px;width:16px;height:142px;"></div>
<div class="th" style="left:812px;top:658px;width:15px;height:108px;"></div>
<svg style="left:812px;top:641px" width="16" height="17" viewBox="0 0 16 17"><path d="M4 11.2 L8 7.2 L12 11.2" fill="none" stroke="#b8b8b8" stroke-width="1.9"/></svg><svg style="left:812px;top:766px" width="16" height="17" viewBox="0 0 16 17"><path d="M4 6.3 L8 10.3 L12 6.3" fill="none" stroke="#b8b8b8" stroke-width="1.9"/></svg><div class="sb" style="left:15px;top:785px;width:795px;height:16px;"></div>
<div class="th" style="left:32px;top:785px;width:761px;height:15px;"></div>
<svg style="left:15px;top:785px" width="17" height="16" viewBox="0 0 17 16"><path d="M10.7 3.5 L6.7 7.5 L10.7 11.5" fill="none" stroke="#b8b8b8" stroke-width="1.9"/></svg><svg style="left:793px;top:785px" width="17" height="16" viewBox="0 0 17 16"><path d="M6.3 3.5 L10.3 7.5 L6.3 11.5" fill="none" stroke="#b8b8b8" stroke-width="1.9"/></svg><div class="btn" style="left:16px;top:813px;width:98px;height:23px;"></div>
<div class="btn" style="left:120px;top:813px;width:98px;height:23px;"></div>
<span class="t" style="left:54.60px;top:818.84px;font-size:12px;color:#838383;letter-spacing:-0.073px;">Edit</span><span class="t" style="left:151.70px;top:818.84px;font-size:12px;color:#838383;letter-spacing:-0.171px;">Delete</span><div class="status" style="left:8px;top:847px;width:1687px;height:20px;border-top:1px solid #a0a0a0;border-left:1px solid #a0a0a0;border-bottom:1px solid #fff;border-right:1px solid #fff;"></div>
<svg style="left:1700px;top:853px" width="12" height="12" viewBox="0 0 12 12"><g fill="#b8b8b8"><rect x="8" y="2" width="2" height="2"/><rect x="5" y="5" width="2" height="2"/><rect x="8" y="5" width="2" height="2"/><rect x="2" y="8" width="2" height="2"/><rect x="5" y="8" width="2" height="2"/><rect x="8" y="8" width="2" height="2"/></g></svg><div style="left:839px;top:111px;width:871px;height:444px;background:#fff;"></div>
<div class="view3d" style="left:840px;top:112px;width:869px;height:442px;background:#000;"><svg style="left:0;top:0" width="869" height="442" viewBox="0 0 869 442" shape-rendering="crispEdges">
<polygon points="295.6,99.5 499.4,81.8 573.4,131.0 573.5,342.5 370.0,360.1 295.5,310.5" fill="#051a0d"/>
<line x1="295.6" y1="99.5" x2="499.4" y2="81.8" stroke="#1c9a36" stroke-width="1"/>
<line x1="499.4" y1="81.8" x2="573.4" y2="131.0" stroke="#1c9a36" stroke-width="1"/>
<line x1="573.4" y1="131.0" x2="369.6" y2="149.1" stroke="#1c9a36" stroke-width="1"/>
<line x1="369.6" y1="149.1" x2="295.6" y2="99.5" stroke="#1c9a36" stroke-width="1"/>
<line x1="295.5" y1="310.5" x2="499.3" y2="292.6" stroke="#1c9a36" stroke-width="1"/>
<line x1="499.3" y1="292.6" x2="573.5" y2="342.5" stroke="#1c9a36" stroke-width="1"/>
<line x1="573.5" y1="342.5" x2="370.0" y2="360.1" stroke="#1c9a36" stroke-width="1"/>
<line x1="370.0" y1="360.1" x2="295.5" y2="310.5" stroke="#1c9a36" stroke-width="1"/>
<line x1="295.6" y1="99.5" x2="295.5" y2="310.5" stroke="#1c9a36" stroke-width="1"/>
<line x1="499.4" y1="81.8" x2="499.3" y2="292.6" stroke="#1c9a36" stroke-width="1"/>
<line x1="573.4" y1="131.0" x2="573.5" y2="342.5" stroke="#1c9a36" stroke-width="1"/>
<line x1="369.6" y1="149.1" x2="370.0" y2="360.1" stroke="#1c9a36" stroke-width="1"/>
<line x1="434.7" y1="53.0" x2="434.7" y2="179.0" stroke="#22e022" stroke-width="1"/>
<path d="M434.7,10.0 L445.4,51.0 A10.7,4 0 0 1 424.0,51.0 Z" fill="#00ff00"/>
<circle cx="434.6" cy="220.7" r="21.7" fill="#c5a408"/>
<line x1="434.7" y1="179.0" x2="434.7" y2="263.0" stroke="#ffcb05" stroke-width="1"/>
<line x1="451.8" y1="184.9" x2="417.3" y2="256.8" stroke="#ffcb05" stroke-width="1"/>
<line x1="470.0" y1="198.4" x2="398.9" y2="243.7" stroke="#ffcb05" stroke-width="1"/>
<line x1="398.9" y1="190.0" x2="470.0" y2="251.7" stroke="#ffcb05" stroke-width="1"/>
<line x1="393.9" y1="224.3" x2="475.2" y2="217.5" stroke="#ffcb05" stroke-width="1"/>
<line x1="418.6" y1="203.2" x2="450.5" y2="238.0" stroke="#ffcb05" stroke-width="1"/>
<line x1="420.0" y1="211.0" x2="434.5" y2="220.7" stroke="#ffcb05" stroke-width="1"/>
<line x1="475.2" y1="217.5" x2="596.0" y2="207.3" stroke="#e01e10" stroke-width="1"/>
<path d="M639.3,202.9 L594.6,195.6 Q591.5,206.0 598.2,217.0 Z" fill="#ff0000"/>
<line x1="452.0" y1="233.0" x2="486.0" y2="254.8" stroke="#1428e8" stroke-width="1"/>
<path d="M495.0,249.6 C501.0,249.6 504.5,253.0 505.5,258.0 L508.3,269.5 Q508.5,271.0 506.5,271.0 L493.0,271.0 C487.0,270.0 483.6,265.5 483.6,260.0 C483.6,254.0 488.5,249.6 495.0,249.6 Z" fill="#0a1cd2"/>
<line x1="499.4" y1="81.8" x2="499.3" y2="292.6" stroke="#1c9a36" stroke-width="1"/>
</svg></div>
<div style="left:847px;top:568px;width:13px;height:13px;background:#f3f8fe;border:1px solid #3399ff;"><svg width="13" height="13" viewBox="0 0 13 13" style="left:-1px;top:-1px"><path d="M2.9 6.2 L5.3 9 L10.2 3.2" fill="none" stroke="#000" stroke-width="2"/></svg></div>
<span class="t" style="left:865.46px;top:568.84px;font-size:12px;letter-spacing:-0.040px;">Show cross-section (image):</span><div class="combo" style="left:1027px;top:564px;width:414px;height:21px;border:1px solid #acacac;background:#fff;"></div>
<div style="left:1423px;top:565px;width:17px;height:19px;border:1px solid #dadada;background:#f0f0f0;"><svg style="left:3px;top:5px" width="10" height="8" viewBox="0 0 10 8"><path d="M1 1.2 L5 5.6 L9 1.2" fill="none" stroke="#b9b9b9" stroke-width="1.5"/></svg></div>
<div style="left:1453px;top:568px;width:13px;height:13px;background:#fff;border:1px solid #707070;"><svg width="13" height="13" viewBox="0 0 13 13" style="left:-1px;top:-1px"><path d="M2.9 6.2 L5.3 9 L10.2 3.2" fill="none" stroke="#000" stroke-width="2"/></svg></div>
<span class="t" style="left:1472.00px;top:568.84px;font-size:12px;letter-spacing:-0.220px;transform:scaleX(0.9904);transform-origin:0 0;">square values</span><div style="left:847px;top:599px;width:13px;height:13px;background:#fff;border:1px solid #707070;"><svg width="13" height="13" viewBox="0 0 13 13" style="left:-1px;top:-1px"><path d="M2.9 6.2 L5.3 9 L10.2 3.2" fill="none" stroke="#000" stroke-width="2"/></svg></div>
<span class="t" style="left:865.46px;top:599.84px;font-size:12px;letter-spacing:-0.022px;">Show graph:</span><div class="combo" style="left:944px;top:595px;width:380px;height:21px;border:1px solid #acacac;background:#fff;"></div>
<div style="left:1306px;top:596px;width:17px;height:19px;border:1px solid #dadada;background:#f0f0f0;"><svg style="left:3px;top:5px" width="10" height="8" viewBox="0 0 10 8"><path d="M1 1.2 L5 5.6 L9 1.2" fill="none" stroke="#b9b9b9" stroke-width="1.5"/></svg></div>
<div class="graph" style="left:840px;top:621px;width:489px;height:211px;background:#fff;"><svg style="left:0;top:0" width="489" height="211" viewBox="0 0 489 211" shape-rendering="crispEdges">
<path d="M269.5 7V160 M57 83.5H482" stroke="#e6e6e6" stroke-width="1" fill="none"/>
<path d="M56.5 6V161 M482.5 6V161 M45 6.5H483 M45 160.5H483 M50 14.5H56 M50 21.5H56 M50 29.5H56 M50 37.5H56 M50 45.5H56 M50 52.5H56 M50 60.5H56 M50 68.5H56 M50 75.5H56 M45 83.5H56 M50 91.5H56 M50 98.5H56 M50 106.5H56 M50 114.5H56 M50 121.5H56 M50 129.5H56 M50 137.5H56 M50 145.5H56 M50 152.5H56 M56.5 160V172 M77.5 160V167 M99.5 160V167 M120.5 160V167 M141.5 160V167 M162.5 160V167 M184.5 160V167 M205.5 160V167 M226.5 160V167 M248.5 160V167 M269.5 160V172 M290.5 160V167 M312.5 160V167 M333.5 160V167 M354.5 160V167 M376.5 160V167 M397.5 160V167 M418.5 160V167 M439.5 160V167 M461.5 160V167 M482.5 160V172" stroke="#000" stroke-width="1" fill="none"/>
<rect x="446.5" y="11.5" width="31" height="21" fill="#fff" stroke="#000"/>
<path d="M451 23.5H467" stroke="#000"/><rect x="454.5" y="19.5" width="8" height="8" fill="none" stroke="#000"/>
<text x="22" y="17" font-family="DejaVu Sans, Liberation Sans, sans-serif" font-size="11.5" fill="#000" shape-rendering="auto" textLength="18.7" lengthAdjust="spacing">1.0</text>
<text x="22.5" y="87" font-family="DejaVu Sans, Liberation Sans, sans-serif" font-size="11.5" fill="#000" shape-rendering="auto" textLength="18.7" lengthAdjust="spacing">0.5</text>
<text x="22.5" y="157" font-family="DejaVu Sans, Liberation Sans, sans-serif" font-size="11.5" fill="#000" shape-rendering="auto" textLength="18.7" lengthAdjust="spacing">0.0</text>
<text x="56.299999999999955" y="185" font-family="DejaVu Sans, Liberation Sans, sans-serif" font-size="11.5" fill="#000" shape-rendering="auto" textLength="18.7" lengthAdjust="spacing">0.0</text>
<text x="259.4000000000001" y="185" font-family="DejaVu Sans, Liberation Sans, sans-serif" font-size="11.5" fill="#000" shape-rendering="auto" textLength="18.7" lengthAdjust="spacing">0.5</text>
<text x="462.5" y="185" font-family="DejaVu Sans, Liberation Sans, sans-serif" font-size="11.5" fill="#000" shape-rendering="auto" textLength="18.7" lengthAdjust="spacing">1.0</text>
<text x="266.20000000000005" y="202.5" font-family="DejaVu Sans, Liberation Sans, sans-serif" font-size="11.5" fill="#000" shape-rendering="auto">x</text>
<text transform="translate(15.299999999999955,86.20000000000005) rotate(-90)" font-family="DejaVu Sans, Liberation Sans, sans-serif" font-size="10.8" fill="#000" shape-rendering="auto">y</text>
</svg></div>
<div class="group" style="left:1333px;top:603px;width:371px;height:233px;border:1px solid #a0a0a0;"></div>
<div style="left:1338px;top:597px;width:67px;height:12px;background:#f0f0f0;"></div>
<span class="t" style="left:1338.13px;top:596.84px;font-size:12px;letter-spacing:-0.023px;">GSvit output</span><div class="white" style="left:1335px;top:610px;width:351px;height:208px;"></div>
<div class="sb" style="left:1687px;top:610px;width:16px;height:208px;"></div>
<div class="th" style="left:1687px;top:627px;width:15px;height:173px;"></div>
<svg style="left:1687px;top:610px" width="16" height="17" viewBox="0 0 16 17"><path d="M4 11.2 L8 7.2 L12 11.2" fill="none" stroke="#b8b8b8" stroke-width="1.9"/></svg><svg style="left:1687px;top:801px" width="16" height="17" viewBox="0 0 16 17"><path d="M4 6.3 L8 10.3 L12 6.3" fill="none" stroke="#b8b8b8" stroke-width="1.9"/></svg><div class="sb" style="left:1335px;top:819px;width:351px;height:16px;"></div>
<div class="th" style="left:1352px;top:819px;width:316px;height:15px;"></div>
<svg style="left:1335px;top:819px" width="17" height="16" viewBox="0 0 17 16"><path d="M10.7 3.5 L6.7 7.5 L10.7 11.5" fill="none" stroke="#b8b8b8" stroke-width="1.9"/></svg><svg style="left:1669px;top:819px" width="17" height="16" viewBox="0 0 17 16"><path d="M6.3 3.5 L10.3 7.5 L6.3 11.5" fill="none" stroke="#b8b8b8" stroke-width="1.9"/></svg>
</body>
</html>
